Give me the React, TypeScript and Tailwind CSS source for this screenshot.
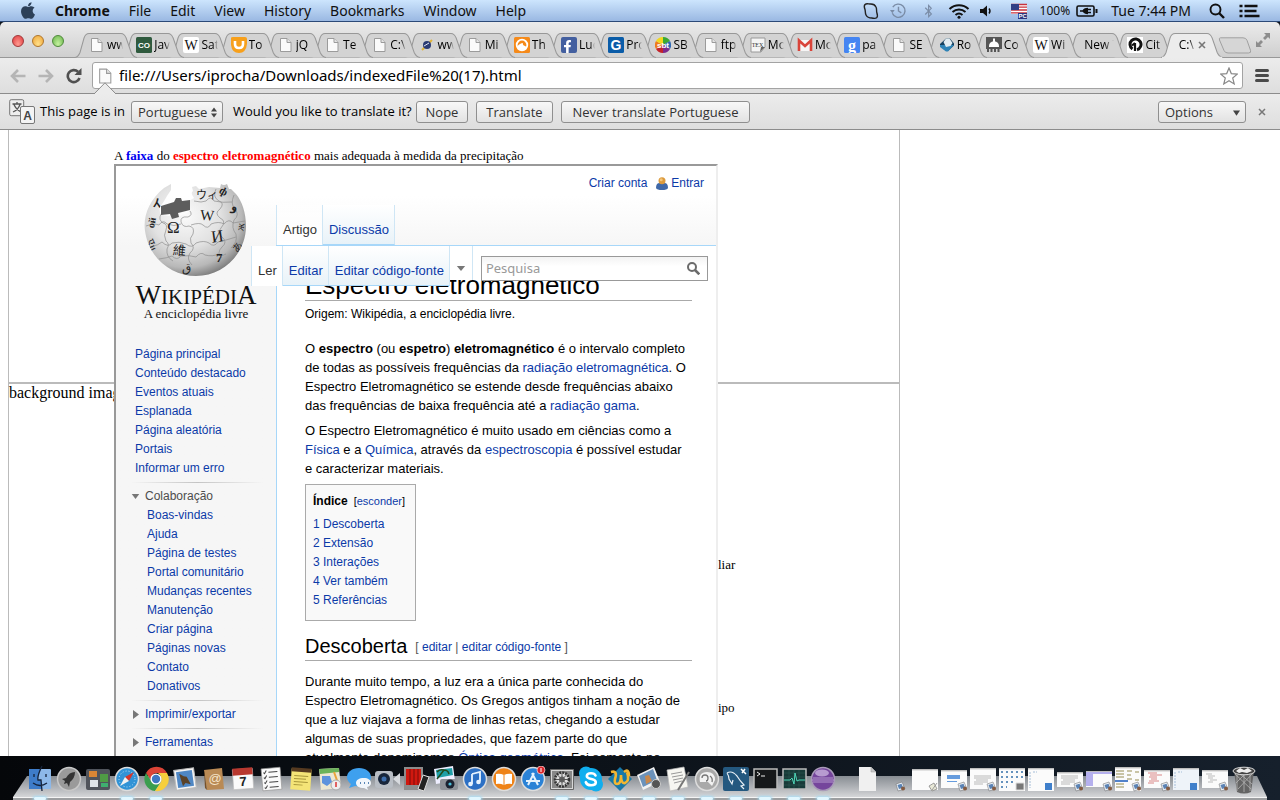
import React from "react";
import { FaApple, FaBluetoothB, FaFacebookF, FaSkype } from "react-icons/fa";

type IconProps = { className?: string };

/* ---------- Menu bar ---------- */

const menus = ["File", "Edit", "View", "History", "Bookmarks", "Window", "Help"];

function MenuBar() {
  return (
    <header className="flex h-[22px] shrink-0 items-center justify-between border-b border-[#2c4a78] bg-linear-to-b from-[#cde5fd] to-[#9ab8e2] pr-5 pl-5 font-['Noto_Sans',sans-serif] text-[14px] leading-[20px] text-[#111]">
      <nav className="flex items-center gap-[19px]">
        <FaApple className="h-[19px] w-[16px] text-[#2d4058]" />
        <button className="font-bold">Chrome</button>
        {menus.map((m) => (
          <button key={m}>{m}</button>
        ))}
      </nav>
      <div className="flex items-center">
        <svg viewBox="0 0 18 18" className="mr-[9px] h-[18px] w-[18px]" fill="none" stroke="#222" strokeWidth="1.4">
          <path d="M3 2.500C4.500 1 6.500 2 8 2c3-.3 5 .8 6 3 1 2 .3 4 .8 5.500.7 2 1.200 4-.2 5.300-1.500 1.200-3.300.3-4.800.2C7 16 5 15 4 13c-1-2-.5-4-1-5.500C2.300 5.800 1.600 4 3 2.500Z" />
        </svg>
        <svg viewBox="0 0 18 18" className="mr-[16px] h-[17px] w-[18px]" fill="none" stroke="#7a8ca6" strokeWidth="1.500">
          <path d="M3.500 5.500A7 7 0 1 1 3 12M9.500 5v4.500l3 2" />
          <path d="M.5 8.500h5L3 12Z" fill="#7a8ca6" stroke="none" />
        </svg>
        <FaBluetoothB className="mr-[14px] h-[14px] w-[11px] text-[#7a8ca6]" />
        <svg viewBox="0 0 22 16" className="mr-[10px] h-[16px] w-[22px]" fill="none" stroke="#111" strokeWidth="2">
          <path d="M1.500 6a14 14 0 0 1 19 0M4.500 9a10 10 0 0 1 13 0M7.500 12a5.500 5.500 0 0 1 7 0" />
          <circle cx="11" cy="14.300" r="1.500" fill="#111" stroke="none" />
        </svg>
        <svg viewBox="0 0 12 12" className="mr-[19px] h-[12px] w-[12px]">
          <path d="M0 4h3l4-3.500v11L3 8H0Z" fill="#111" />
          <path d="M9 3.500q2 2.500 0 5" fill="none" stroke="#111" strokeWidth="1.400" />
        </svg>
        <svg viewBox="0 0 16 16" className="mr-[13px] h-[16px] w-[16px]">
          <path fill="#fff" d="M0 1h16v10H0z" />
          <path stroke="#c8323c" strokeWidth="1.300" d="M0 1.500h16M0 4.200h16M0 7h16M0 9.800h16" />
          <path fill="#313d85" d="M0 1h8v6H0z" />
          <path fill="#2d357d" d="M7 10h9v6H7z" />
          <text x="7.500" y="15.300" fontSize="6" fontWeight="bold" fill="#fff" fontFamily="Liberation Sans">PC</text>
        </svg>
        <span className="mr-[6px] text-[12px]">100%</span>
        <svg viewBox="0 0 22 12" className="mr-[13px] h-[12px] w-[22px]" fill="none" stroke="#111">
          <rect x="1" y="1" width="17" height="10" rx="1.500" strokeWidth="1.600" />
          <path d="M20.500 4v4" strokeWidth="2" />
          <path d="M4 6h3M12 4.500h3M12 7.500h3" strokeWidth="1.300" />
          <path d="M12 2.800v6.400C9 9.200 7 8 6.500 6 7 4 9 2.800 12 2.800Z" fill="#111" stroke="none" />
        </svg>
        <time className="mr-[18px]">Tue 7:44 PM</time>
        <svg viewBox="0 0 16 16" className="mr-[14px] h-[16px] w-[16px]" fill="none" stroke="#111" strokeWidth="1.900">
          <circle cx="6.500" cy="6.500" r="5" />
          <path d="m10 10 5 5" strokeWidth="2.400" />
        </svg>
        <svg viewBox="0 0 20 14" className="h-[14px] w-[21px]" stroke="#111" strokeWidth="2.600">
          <path d="M0 2h3M5 2h13M0 7h3M5 7h12M0 12h3M5 12h15" />
        </svg>
      </div>
    </header>
  );
}

/* ---------- Favicons ---------- */

const PageIcon = ({ className = "h-4 w-4" }: IconProps) => (
  <svg viewBox="0 0 16 16" className={className}>
    <path d="M2.500 1.500h6.500l4 4v9H2.500Z" fill="#fafafa" stroke="#9b9b9b" />
    <path d="M9 1.500v4h4" fill="#e4e4e4" stroke="#9b9b9b" />
  </svg>
);

const Letter = ({ t, bg, fg, size = 12, serif = false }: { t: string; bg: string; fg: string; size?: number; serif?: boolean }) => (
  <svg viewBox="0 0 16 16" className="h-4 w-4">
    <rect width="16" height="16" rx="1.500" fill={bg} />
    <text x="8" y={8 + size * 0.36} textAnchor="middle" fontSize={size} fontWeight="bold" fill={fg} fontFamily={serif ? "Liberation Serif" : "Liberation Sans"}>
      {t}
    </text>
  </svg>
);

const WikiW = () => (
  <svg viewBox="0 0 16 16" className="h-4 w-4">
    <rect width="16" height="16" rx="2" fill="#fff" />
    <text x="8" y="12.500" textAnchor="middle" fontSize="14" fill="#111" fontFamily="Liberation Serif">W</text>
  </svg>
);

const Udemy = () => (
  <svg viewBox="0 0 16 16" className="h-4 w-4">
    <path d="M0 1q0-1 2-1h12q2 0 2 2v5q-1 9-8 9T0 8Z" fill="#f7a01c" />
    <path d="M4 4v3q0 4 4 4t4-4V4" fill="none" stroke="#fff" strokeWidth="2.600" />
  </svg>
);

const Bug = () => (
  <svg viewBox="0 0 16 16" className="h-4 w-4">
    <path d="m3 13 10-10" stroke="#e0b43a" strokeWidth="2" />
    <circle cx="8" cy="8" r="4" fill="#2b3c73" />
    <path d="m5 9 5-3" stroke="#dfe4f2" />
  </svg>
);

const Grooveshark = () => (
  <svg viewBox="0 0 16 16" className="h-4 w-4">
    <rect width="16" height="16" rx="1.500" fill="#f58a1a" />
    <circle cx="8" cy="8" r="5.300" fill="none" stroke="#fff" strokeWidth="1.800" />
    <path d="M3 10c2-3 4-4 6-4-1 2 2 3 4 4-2 4-8 4-10 0Z" fill="#fff" />
  </svg>
);

const Facebook = () => (
  <span className="flex h-4 w-4 items-end justify-end rounded-[2px] bg-[#435f9f] pr-[3px]">
    <FaFacebookF size={13} color="#fff" />
  </span>
);

const Sbt = () => (
  <svg viewBox="0 0 16 16" className="h-4 w-4">
    <path d="M8 8V0a8 8 0 0 1 7 4Z" fill="#3aa935" />
    <path d="m8 8 7-4a8 8 0 0 1 0 8Z" fill="#2f6ab5" />
    <path d="m8 8 7 4a8 8 0 0 1-7 4Z" fill="#7b2b8d" />
    <path d="M8 8v8a8 8 0 0 1-7-4Z" fill="#c4232b" />
    <path d="m8 8-7 4a8 8 0 0 1 0-8Z" fill="#ee7d1c" />
    <path d="M8 8 1 4a8 8 0 0 1 7-4Z" fill="#f3d81f" />
    <text x="8" y="11" textAnchor="middle" fontSize="8" fontWeight="bold" fill="#fff" fontFamily="Liberation Sans">sbt</text>
  </svg>
);

const Tex = () => (
  <svg viewBox="0 0 16 16" className="h-4 w-4">
    <path d="M1 1h14v9l-4 5H1Z" fill="#f5f5f5" stroke="#999" />
    <text x="7.500" y="9.500" textAnchor="middle" fontSize="6" fill="#333" fontFamily="Liberation Serif">TEX</text>
    <path d="m10 15 1-5h4Z" fill="#666" />
  </svg>
);

const Gmail = () => (
  <svg viewBox="0 0 16 16" className="h-4 w-4">
    <path d="M1 3h14v11H1Z" fill="#f6f6f6" />
    <path d="M2 14V3.500l6 5.500 6-5.500V14" fill="none" stroke="#d9443a" strokeWidth="2.600" />
  </svg>
);

const Cube = () => (
  <svg viewBox="0 0 16 16" className="h-4 w-4">
    <path d="M1 7 7 1.500h4l4 5v2L9 14H7L1 9Z" fill="#15405f" />
    <path d="M1 8v2l6 4.500h2L15 8Z" fill="#2f84b7" />
    <path d="M4.500 5 7 1.500h3.500l3 4.500-2 3-4.500 1Z" fill="#e3edf2" />
  </svg>
);

const Capitol = () => (
  <svg viewBox="0 0 16 16" className="h-4 w-4">
    <path d="M0 0h16v10H0Z" fill="#555" />
    <path d="M3 9q0-4 5-5 5 1 5 5v2H3ZM7 1.500h2V5H7Z" fill="#fff" />
    <path d="M0 10h16v2H0ZM1 12h2v3H1ZM4.500 12h2v3h-2ZM8 12h2v3H8ZM11.500 12h2v3h-2Z" fill="#555" />
  </svg>
);

const CiteIcon = () => (
  <svg viewBox="0 0 16 16" className="h-4 w-4">
    <path fill="#fff" d="M0 0h16v16H0z" />
    <path d="M5.500 12A5.500 5.500 0 1 1 10 12.700" fill="none" stroke="#111" strokeWidth="3" />
    <path d="M8 6v8M5 8.500 8 6" stroke="#111" strokeWidth="2.200" />
  </svg>
);

const tabs: { icon: React.ReactNode; title: string }[] = [
  { icon: <PageIcon />, title: "ww" },
  { icon: <Letter t="CO" bg="#2f5a3e" fg="#fff" size={8} />, title: "Jav" },
  { icon: <WikiW />, title: "Sat" },
  { icon: <Udemy />, title: "To" },
  { icon: <PageIcon />, title: "jQ" },
  { icon: <PageIcon />, title: "Te" },
  { icon: <PageIcon />, title: "C:\\" },
  { icon: <Bug />, title: "ww" },
  { icon: <PageIcon />, title: "Mi" },
  { icon: <Grooveshark />, title: "Th" },
  { icon: <Facebook />, title: "Luc" },
  { icon: <Letter t="G" bg="#0a5ca8" fg="#fff" size={14} />, title: "Pro" },
  { icon: <Sbt />, title: "SB" },
  { icon: <PageIcon />, title: "ftp" },
  { icon: <Tex />, title: "Mo" },
  { icon: <Gmail />, title: "Mo" },
  { icon: <Letter t="g" bg="#4585f2" fg="#fff" size={16} serif />, title: "pa" },
  { icon: <PageIcon />, title: "SE" },
  { icon: <Cube />, title: "Ro" },
  { icon: <Capitol />, title: "Co" },
  { icon: <WikiW />, title: "Wi" },
  { icon: null, title: "New T" },
  { icon: <CiteIcon />, title: "Cit" },
  { icon: null, title: "C:\\" },
];

/* ---------- Browser chrome ---------- */

function Tab({ icon, title, index }: { icon: React.ReactNode; title: string; index: number }) {
  const active = index === tabs.length - 1;
  return (
    <div className="relative h-[25px] min-w-0 flex-1" style={{ zIndex: active ? 40 : 30 - index }}>
      <svg viewBox="0 0 62 25" preserveAspectRatio="none" className="absolute top-0 -left-[7px] h-[25px] w-[calc(100%+15px)]">
        <path d="M0 24.500C3 24 4 22 5 19.500L9 5Q10.500.5 14 .5H46Q49 .5 51 5l5 14.500Q58 24 62 24.500" fill={active ? "#ececec" : "#d3d3d3"} stroke="#989898" />
        {active && <path d="M1 24.500h60" stroke="#ececec" strokeWidth="1.500" />}
      </svg>
      <button className={`relative flex h-[24px] w-full items-center gap-[2px] overflow-hidden pl-[7px] text-[12px] text-black ${active ? "pr-[5px]" : "pr-[6px]"}`}>
        {icon && <span className="shrink-0">{icon}</span>}
        <span className={`min-w-0 flex-1 overflow-hidden mask-r-from-70% text-left whitespace-nowrap ${icon ? "" : "pl-[4px]"}`}>{title}</span>
        {active && (
          <svg viewBox="0 0 8 8" className="mr-[4px] h-[8px] w-[8px] shrink-0" stroke="#777" strokeWidth="1.600">
            <path d="m1 1 6 6M7 1 1 7" />
          </svg>
        )}
      </button>
    </div>
  );
}

function TabStrip() {
  return (
    <div className="relative flex h-[36px] shrink-0 items-end rounded-t-[5px] border-b border-[#989898] bg-linear-to-b from-[#ebebeb] to-[#cfcfcf] pl-[12px]">
      <div className="flex w-[70px] items-center gap-[8px] self-center pt-[2px]">
        <button aria-label="Close" className="h-[12px] w-[12px] rounded-full border border-[#a1383a] bg-radial-[at_50%_80%] from-[#ff9a90] to-[#df3a3e]" />
        <button aria-label="Minimise" className="h-[12px] w-[12px] rounded-full border border-[#b0762b] bg-radial-[at_50%_80%] from-[#ffe08a] to-[#eea436]" />
        <button aria-label="Zoom" className="h-[12px] w-[12px] rounded-full border border-[#4f8a3b] bg-radial-[at_50%_80%] from-[#c6f2a0] to-[#68b44a]" />
      </div>
      <div className="isolate -mb-px flex min-w-0 flex-1 font-['Open_Sans',sans-serif]">
        {tabs.map((t, i) => (
          <Tab key={i} index={i} icon={t.icon} title={t.title} />
        ))}
      </div>
      <button aria-label="New tab" className="mb-[3px] ml-[3px]">
        <svg viewBox="0 0 34 17" className="h-[17px] w-[34px]">
          <path d="M2.500.8H25q3 0 4 2.500l3.500 10q1 2.700-2 2.700H10q-3 0-4-2.500L1.500 3Q.8.8 2.500.8Z" fill="#d6d6d6" stroke="#a0a0a0" />
        </svg>
      </button>
      <svg viewBox="0 0 16 16" className="mr-[9px] mb-[9px] ml-[3px] h-[16px] w-[16px]" fill="#8d8d8d">
        <path d="M9 1h6v6l-2-2-3 3-2-2 3-3ZM7 15H1V9l2 2 3-3 2 2-3 3Z" />
      </svg>
    </div>
  );
}

function Arrow({ flip = false }: { flip?: boolean }) {
  return (
    <button aria-label={flip ? "Forward" : "Back"}>
      <svg viewBox="0 0 16 14" className={`h-[14px] w-[16px] ${flip ? "-scale-x-100" : ""}`} fill="none" stroke="#b5b5b5" strokeWidth="2.600">
        <path d="M15.500 7H2.500M8 1 2 7l6 6" />
      </svg>
    </button>
  );
}

function Toolbar() {
  return (
    <div className="flex h-[36px] shrink-0 items-center border-b border-[#8c8c8c] bg-linear-to-b from-[#ececec] to-[#dedede] pr-[11px] pl-[10px]">
      <div className="flex w-[82px] items-center gap-[12px]">
        <Arrow />
        <Arrow flip />
        <button aria-label="Reload">
          <svg viewBox="0 0 16 16" className="h-[16px] w-[16px]">
            <path d="M13.500 10A6 6 0 1 1 12 3.800" fill="none" stroke="#505050" strokeWidth="2.600" />
            <path d="M15.500 0v7H8.500Z" fill="#505050" />
          </svg>
        </button>
      </div>
      <div className="relative flex h-[27px] min-w-0 flex-1 items-center rounded-[3px] border border-[#a3a3a3] bg-white pr-[4px] pl-[4px]">
        <PageIcon className="h-[18px] w-[17px]" />
        <input
          aria-label="Address"
          className="min-w-0 flex-1 bg-transparent pl-[5px] font-['Noto_Sans',sans-serif] text-[15px] text-black outline-none"
          defaultValue="file:///Users/iprocha/Downloads/indexedFile%20(17).html"
        />
        <button aria-label="Bookmark">
          <svg viewBox="0 0 18 18" className="h-[18px] w-[18px]" fill="#fff" stroke="#888" strokeWidth="1.200">
            <path d="m9 1 2.300 5.600 6 .5-4.600 3.900 1.500 5.900L9 13.700l-5.200 3.200L5.300 11 .7 7.100l6-.5Z" />
          </svg>
        </button>
        <svg viewBox="0 0 22 12" className="absolute -bottom-[6px] left-[1px] h-[12px] w-[22px]">
          <path d="M0 12 11 .8 22 12" fill="#ececec" stroke="#8c8c8c" />
        </svg>
      </div>
      <button aria-label="Menu" className="ml-[12px] flex w-[14px] flex-col gap-[2px]">
        <span className="h-[3px] rounded-sm bg-[#4a4a4a]" />
        <span className="h-[3px] rounded-sm bg-[#4a4a4a]" />
        <span className="h-[3px] rounded-sm bg-[#4a4a4a]" />
      </button>
    </div>
  );
}

const pushButton =
  "h-[22px] rounded-[3px] border border-[#8f8f8f] bg-linear-to-b from-[#f8f8f8] to-[#e2e2e2] leading-[20px] text-[#333]";

function TranslateBar() {
  return (
    <div className="flex h-[36px] shrink-0 items-center border-b border-[#8c8c8c] bg-linear-to-b from-[#ececec] to-[#dedede] pr-[14px] pl-[9px] font-['Open_Sans',sans-serif] text-[13px] whitespace-nowrap text-black">
      <svg viewBox="0 0 26 26" className="h-[26px] w-[26px]">
        <rect x=".7" y=".7" width="14" height="16" rx="1.500" fill="#eee" stroke="#777" />
        <path d="M3.500 5h9M8 3v2M5 5.500q2 5 7 7.500M11 5.500Q9 11 4 13" fill="none" stroke="#555" strokeWidth="1.300" />
        <rect x="11.500" y="7.500" width="14" height="17" rx="1.500" fill="#f4f4f4" stroke="#777" />
        <text x="18.500" y="20.500" textAnchor="middle" fontSize="12" fontWeight="bold" fill="#444" fontFamily="Liberation Sans">A</text>
      </svg>
      <label htmlFor="language" className="ml-[5px] w-[91px]">This page is in</label>
      <span className="relative">
        <select id="language" className={`${pushButton} w-[92px] appearance-none pl-[6px]`}>
          <option>Portuguese</option>
        </select>
        <svg viewBox="0 0 6 10" className="pointer-events-none absolute top-[6px] right-[6px] h-[11px] w-[6px]" fill="#444">
          <path d="m0 4 3-4 3 4ZM0 6l3 4 3-4Z" />
        </svg>
      </span>
      <span className="ml-[10px] w-[183px]">Would you like to translate it?</span>
      <span className="flex gap-[8px]">
        <button className={`${pushButton} w-[52px]`}>Nope</button>
        <button className={`${pushButton} w-[77px]`}>Translate</button>
        <button className={`${pushButton} w-[189px]`}>Never translate Portuguese</button>
      </span>
      <span className="relative ml-auto">
        <select aria-label="Options" className={`${pushButton} w-[88px] appearance-none pl-[6px]`}>
          <option>Options</option>
        </select>
        <svg viewBox="0 0 8 6" className="pointer-events-none absolute top-[9px] right-[6px] h-[6px] w-[7px]" fill="#444">
          <path d="M0 0h8L4 6Z" />
        </svg>
      </span>
      <button aria-label="Dismiss" className="ml-[12px]">
        <svg viewBox="0 0 8 8" className="h-[8px] w-[8px]" stroke="#777" strokeWidth="1.500">
          <path d="m1 1 6 6M7 1 1 7" />
        </svg>
      </button>
    </div>
  );
}

/* ---------- Wiki page ---------- */

const A = ({ children }: { children: React.ReactNode }) => (
  <a href="#" className="text-[#0b3aa8]">{children}</a>
);

function Globe() {
  return (
    <svg viewBox="0 0 104 96" className="h-[96px] w-[104px]">
      <defs>
        <radialGradient id="globe" cx=".4" cy=".36" r=".66">
          <stop offset="0" stopColor="#fafafa" />
          <stop offset=".5" stopColor="#e2e2e2" />
          <stop offset=".82" stopColor="#b8b8b8" />
          <stop offset="1" stopColor="#7a7a7a" />
        </radialGradient>
        <clipPath id="ball">
          <path d="M27 3 20 7C5 19-1 35 1 50 5 78 28 95 52 95c28 0 50-23 50-50 0-13-4-25-10-32l-5-5h-2l-2-5q-3 2-6 0l-1 4-11-1-10 2-3-3-4 1 1 4q-3 2 1 7l-5 3v11l-12 5-16-2q-2-4-1-8 5-7 7-11l4-6Z" />
        </clipPath>
      </defs>
      <g clipPath="url(#ball)">
        <path fill="url(#globe)" d="M0 0h104v96H0z" />
        <g fill="none" stroke="#8e8e8e" strokeWidth=".7">
          <path d="M17 33q-3 6 2 9 5 1 3 7-3 5 0 11 4 3 1 8-1 8 6 12M46 30q3 4-2 6-8-1-7 5 2 6 8 4 6 1 4 8-4 4-2 9 5 5-1 10-4 6 2 12M72 8q-4 8 3 12 6 2 1 8-6 4 0 9 7 3 1 10-4 5 1 9 6 5 0 10-6 6 0 11" />
          <path d="M2 45q8-3 13-1 4-6 8-1 7 3 14 0M47 44q9-3 12 0 5 5 8-1 8-3 13 0 5-6 9-1l12-2M6 66q9-2 12-5 6 6 10 1 7-2 14 1 6 5 10-1 8-3 13 0 5 5 9-1 9-2 18-5M15 78q8-1 13-3 5 5 9 0 9-1 15 1 5-6 9-2 8 2 13-1 5 3 8 0M50 20q8 2 12 0 5-6 8 0 9 2 18 1" />
          <path d="M90 14q-4 9 1 14 5 6-1 11-3 8 2 14 2 8-5 14" />
        </g>
        <g fill="#222" fontFamily="'Liberation Serif','Noto Sans CJK SC',serif">
          <text x="23" y="52" fontSize="17">Ω</text>
          <text x="56" y="39" fontSize="15" transform="rotate(4 60 34)">W</text>
          <text x="67" y="61" fontSize="17" transform="rotate(-8 72 55)">И</text>
          <text x="29" y="74" fontSize="13" transform="rotate(5 35 68)">維</text>
          <text x="72" y="81" fontSize="13" fontWeight="bold">7</text>
          <text x="88" y="29" fontSize="12" transform="rotate(12 90 26)" fontWeight="bold">و</text>
          <text x="2" y="46" fontSize="10" transform="rotate(-80 7 42)" fontWeight="bold">ой</text>
          <text x="4" y="66" fontSize="10" transform="rotate(65 8 62)">एи</text>
          <text x="52" y="18" fontSize="11">ウィ</text>
          <text x="76" y="14" fontSize="11" transform="rotate(30 80 10)" fontWeight="bold">ф</text>
          <text x="8" y="28" fontSize="11" transform="rotate(-35 12 24)" fontWeight="bold">イ</text>
          <text x="94" y="48" fontSize="11" transform="rotate(-80 98 46)">ж</text>
          <text x="38" y="91" fontSize="12">ق</text>
          <text x="90" y="70" fontSize="10" transform="rotate(-50 94 68)">あ</text>
        </g>
      </g>
      <path d="m17 25 13-4 2-4h5l1 3 8-1v10l-12 3 1 4-7 2-2-5-9 1Z" fill="#5d5d5d" />
    </svg>
  );
}

const mainLinks = ["Página principal", "Conteúdo destacado", "Eventos atuais", "Esplanada", "Página aleatória", "Portais", "Informar um erro"];
const collabLinks = ["Boas-vindas", "Ajuda", "Página de testes", "Portal comunitário", "Mudanças recentes", "Manutenção", "Criar página", "Páginas novas", "Contato", "Donativos"];

const Divider = () => <div className="-ml-[4px] h-px bg-linear-to-r from-transparent via-[#c4c4c4] to-transparent" />;

const Closed = ({ children }: { children: React.ReactNode }) => (
  <h3 className="flex h-[27px] items-center">
    <svg viewBox="0 0 6 9" className="-ml-[2px] h-[9px] w-[6px]" fill="#777">
      <path d="m0 0 6 4.500L0 9Z" />
    </svg>
    <span className="ml-[6px]"><A>{children}</A></span>
  </h3>
);

function Sidebar() {
  return (
    <aside className="w-[160px] shrink-0 pl-[19px] text-[12px] leading-[19px]">
      <a href="#" className="flex h-[158px] flex-col items-center pt-[15px] pr-[19px] font-['Liberation_Serif',serif] text-[#111]">
        <Globe />
        <span className="mt-[3px] text-[27px] leading-[30px]">
          W<span className="text-[21px]">IKIPÉDI</span>A
        </span>
        <span className="-mt-[6px] text-[13px] leading-[16px]">A enciclopédia livre</span>
      </a>
      <ul className="mt-[21px] mb-[4px]">
        {mainLinks.map((l) => <li key={l}><A>{l}</A></li>)}
      </ul>
      <div className="mr-[12px]">
        <Divider />
        <h3 className="mt-[4px] flex items-center text-[#4d4d4d]">
          <svg viewBox="0 0 9 6" className="-ml-[4px] h-[5px] w-[9px]" fill="#777">
            <path d="M0 0h9L4.500 6Z" />
          </svg>
          <span className="ml-[5px]">Colaboração</span>
        </h3>
        <ul className="mb-[4px] pl-[12px]">
          {collabLinks.map((l) => <li key={l}><A>{l}</A></li>)}
        </ul>
        <Divider />
        <Closed>Imprimir/exportar</Closed>
        <Divider />
        <Closed>Ferramentas</Closed>
      </div>
    </aside>
  );
}

const wikiTab = "flex h-[40px] items-center border-r border-r-[#cfe6f5] pt-[10px] pr-[5px] pl-[6px] text-[13px]";
const wikiTabOff = `${wikiTab} border-b border-b-[#a7d7f9] bg-linear-to-b from-white to-[#e8f2f8] text-[#0b3aa8]`;

function WikiHeader() {
  return (
    <div className="flex h-[79px] flex-col justify-between">
      <div className="flex items-center justify-end pt-[8px] pr-[12px] leading-[19px]">
        <A>Criar conta</A>
        <svg viewBox="0 0 12 13" className="mr-[3px] ml-[9px] h-[13px] w-[12px]">
          <path d="M0 11q0-5 3.500-5h5Q12 6 12 11q-1 2-6 2t-6-2Z" fill="#3f68a8" />
          <circle cx="6" cy="3.800" r="3.500" fill="#dc9a3c" />
          <circle cx="5.200" cy="2.800" r="1.500" fill="#f3c57b" />
        </svg>
        <A>Entrar</A>
      </div>
      <nav className="flex">
        <a href="#" className={`${wikiTab} border-l border-l-[#cfe6f5] bg-linear-to-b from-white/40 to-white text-[#333]`}>Artigo</a>
        <a href="#" className={wikiTabOff}>Discussão</a>
      </nav>
    </div>
  );
}

function ActionRow() {
  return (
    <div className="absolute top-0 -left-[26px] right-[8px] flex items-start">
      <nav className="flex">
        <a href="#" className={`${wikiTab} border-l border-l-[#cfe6f5] bg-white text-[#333]`}>Ler</a>
        <a href="#" className={wikiTabOff}>Editar</a>
        <a href="#" className={wikiTabOff}>Editar código-fonte</a>
      </nav>
      <div className="flex h-[34px] min-w-0 flex-1 bg-white">
        <button aria-label="Mais" className="flex w-[23px] items-center justify-center border-r border-[#cfe6f5] pt-[10px]">
          <svg viewBox="0 0 10 6" className="h-[5px] w-[10px]" fill="#777"><path d="M0 0h10L5 6Z" /></svg>
        </button>
        <div className="mt-[10px] ml-[8px] flex h-[25px] min-w-0 flex-1 items-center border border-[#999] bg-linear-to-b from-[#f3f3f3] to-white to-40% px-[4px]">
          <input aria-label="Pesquisa" placeholder="Pesquisa" className="min-w-0 flex-1 bg-transparent font-['Noto_Sans',sans-serif] text-[13px] outline-none placeholder:text-[#999]" />
          <svg viewBox="0 0 13 13" className="mr-[3px] h-[13px] w-[13px]" fill="none" stroke="#6b6b6b" strokeWidth="2">
            <circle cx="5" cy="5" r="4" />
            <path d="m8 8 4.300 4.300" strokeWidth="2.600" />
          </svg>
        </div>
      </div>
    </div>
  );
}

const toc = ["Descoberta", "Extensão", "Interações", "Ver também", "Referências"];

function Article() {
  return (
    <article className="pr-[24px] pl-[28px] text-[13px] leading-[19px] text-black">
      <h1 className="mt-[22px] h-[33px] border-b border-[#aaa] text-[26px] leading-[34px] whitespace-nowrap">Espectro eletromagnético</h1>
      <p className="mt-[4px] text-[12px]">Origem: Wikipédia, a enciclopédia livre.</p>
      <p className="mt-[15px] whitespace-nowrap">
        O <b>espectro</b> (ou <b>espetro</b>) <b>eletromagnético</b> é o intervalo completo<br />
        de todas as possíveis frequências da <A>radiação eletromagnética</A>. O<br />
        Espectro Eletromagnético se estende desde frequências abaixo<br />
        das frequências de baixa frequência até a <A>radiação gama</A>.
      </p>
      <p className="mt-[6px] whitespace-nowrap">
        O Espectro Eletromagnético é muito usado em ciências como a<br />
        <A>Física</A> e a <A>Química</A>, através da <A>espectroscopia</A> é possível estudar<br />
        e caracterizar materiais.
      </p>
      <section className="mt-[6px] h-[137px] w-[111px] border border-[#aaa] bg-[#f9f9f9] pt-[7px] pl-[7px] text-[12px] whitespace-nowrap">
        <h2 className="flex items-baseline gap-[6px] font-bold">
          Índice <span className="text-[11px] font-normal">[<A>esconder</A>]</span>
        </h2>
        <ol className="mt-[4px]">
          {toc.map((t, i) => <li key={t}><A>{i + 1} {t}</A></li>)}
        </ol>
      </section>
      <h2 className="mt-[12px] flex h-[28px] items-center gap-[8px] border-b border-[#aaa] text-[20px] whitespace-nowrap">
        Descoberta
        <span className="pt-[2px] text-[12px] text-[#555]">[ <A>editar</A> | <A>editar código-fonte</A> ]</span>
      </h2>
      <p className="mt-[11px] whitespace-nowrap">
        Durante muito tempo, a luz era a única parte conhecida do<br />
        Espectro Eletromagnético. Os Gregos antigos tinham a noção de<br />
        que a luz viajava a forma de linhas retas, chegando a estudar<br />
        algumas de suas propriedades, que fazem parte do que<br />
        atualmente denominamos <A>Óptica geométrica</A>. Foi somente no
      </p>
    </article>
  );
}

function Page() {
  return (
    <main className="relative min-h-0 flex-1 overflow-hidden bg-white font-['Liberation_Serif',serif] text-black">
      <div className="ml-[8px] flex h-full w-[892px] flex-col border-x border-[#bbb]">
        <div className="h-[254px] shrink-0 border-b-2 border-[#bbb]" />
        <p className="text-[16px] leading-[18px]">background image</p>
        <div className="pl-[709px] text-[13px] leading-[18px]">
          <p className="mt-[154px]">liar</p>
          <p className="mt-[125px]">ipo</p>
        </div>
      </div>
      <div className="absolute top-[18px] left-[114px] w-[604px]">
        <p className="text-[13px] leading-[16px]">
          A <b className="text-[#0000f0]">faixa</b> do <b className="text-[#f00]">espectro eletromagnético</b> mais adequada à medida da precipitação
        </p>
        <div className="flex border-2 border-t-[#999] border-r-[#eee] border-b-[#eee] border-l-[#999] bg-[#f6f6f6] bg-linear-to-b from-white from-[30px] to-[#f6f6f6] to-[80px] font-['Liberation_Sans',sans-serif] text-[12px]">
          <Sidebar />
          <div className="min-w-0 flex-1">
            <WikiHeader />
            <div className="relative min-h-[520px] border-t border-l border-[#a7d7f9] bg-white">
              <Article />
              <ActionRow />
            </div>
          </div>
        </div>
      </div>
    </main>
  );
}

/* ---------- Dock ---------- */

const Disc = ({ fill, ring = "#ddd", children }: { fill: string; ring?: string; children?: React.ReactNode }) => (
  <g>
    <circle cx="13" cy="13" r="11.500" fill={fill} stroke={ring} strokeWidth="1.500" />
    {children}
  </g>
);

const apps: { name: string; on?: boolean; art: React.ReactNode }[] = [
  { name: "Finder", on: true, art: <g><rect x="2" y="3" width="22" height="20" rx="1" fill="#8db8e8" /><path d="M2 3h12q-4 9-3 11h3l1 9H2Z" fill="#3e7cc9" /><path d="M15 0q-5 10-4 14h3l1 11M7 8v3M19 8v3M6 17q7 5 14 0" fill="none" stroke="#15233b" strokeWidth="1.300" /></g> },
  { name: "Launchpad", art: <Disc fill="#9a9a9a" ring="#c8c8c8"><path d="M19 6q-6 0-9 6l-4 1 3 2-1 3 3-1 2 4 1-5q5-4 5-10Z" fill="#333" /></Disc> },
  { name: "Mission Control", art: <g><rect x="1" y="3" width="24" height="21" rx="2" fill="#50545c" /><path fill="#d98636" d="M4 5h8v6H4z" /><path fill="#4f9b45" d="M15 8h8v8h-8z" /><path fill="#dfe3e8" d="M5 14h8v7H5z" /><path fill="#3fae6f" d="M16 17h7v4h-7z" /></g> },
  { name: "Safari", on: true, art: <Disc fill="#3193d6"><circle cx="13" cy="13" r="8" fill="none" stroke="#bfe3fa" strokeDasharray="1 2" /><path d="m20 6-5 9-4-4Z" fill="#d6362b" /><path d="m6 20 9-5-4-4Z" fill="#f2f2f2" /></Disc> },
  { name: "Chrome", on: true, art: <g><path d="M3 7a12 12 0 0 1 21 0H13a6 6 0 0 0-5 7Z" fill="#db4437" /><path d="M3 7a12 12 0 0 0 9 18l6-9a6 6 0 0 1-10-1Z" fill="#3a9e4f" /><path d="M24 7a12 12 0 0 1-12 18l6-9q2-5-3-9Z" fill="#f7cf3c" /><circle cx="13" cy="13" r="5.500" fill="#fff" /><circle cx="13" cy="13" r="4.200" fill="#3f78c3" /></g> },
  { name: "Mail", art: <g transform="rotate(-8 13 13)"><path fill="#f4f4f4" stroke="#bbb" d="M3 3h20v20H3z" /><path fill="#4f87c4" d="M5 5h16v16H5z" /><path d="m8 7 4 3 3 1 3 8-5-2-3 3-1-6Z" fill="#5a4228" /></g> },
  { name: "Contacts", art: <g><path d="m3 4 18-2 2 21-17 1Z" fill="#b98a55" /><path d="m3 4 3 20-2-2Z" fill="#775028" /><text x="14" y="17" textAnchor="middle" fontSize="13" fill="#f4e3c8" fontFamily="Liberation Sans">@</text></g> },
  { name: "Calendar", art: <g transform="rotate(-4 13 13)"><path fill="#fafafa" stroke="#bbb" strokeWidth=".6" d="M3 3h20v20H3z" /><path fill="#b8382f" d="M3 2h20v7H3z" /><text x="13" y="20" textAnchor="middle" fontSize="13" fontWeight="bold" fill="#222" fontFamily="Liberation Sans">7</text></g> },
  { name: "Reminders", art: <g transform="rotate(-5 13 13)"><path fill="#fafafa" stroke="#999" strokeWidth=".7" d="M3 2h19v22H3z" /><path d="m5 6 1 1 2-3M5 11l1 1 2-3M5 16l1 1 2-3M5 21l1 1 2-3M10 6h9M10 11h9M10 16h9M10 21h9" fill="none" stroke="#444" /></g> },
  { name: "Notes", art: <g transform="rotate(4 13 13)"><path fill="#f4e477" d="M3 3h20v21H3z" /><path fill="#563a20" d="M3 2h20v4H3z" /><path d="M6 10h14M6 13h12M6 16h14M6 19h9" stroke="#a7963a" /></g> },
  { name: "Maps", art: <g><path d="m2 3 20-1 2 20-20 2Z" fill="#ece7d2" /><path d="m2 3 20-1v4L3 8Z" fill="#6bb35a" /><path d="M5 10h8l2 6-5 4-5-3Z" fill="#5d93dd" /><path d="m17 6 5 14" stroke="#e9a33b" strokeWidth="2" /><circle cx="19" cy="19" r="5" fill="#eee" stroke="#aaa" /><path d="M19 16v5" stroke="#d33" strokeWidth="1.500" /></g> },
  { name: "Messages", art: <g><path d="M13 2C6 2 1 6 1 11q0 4 4 7l-2 4 6-2c10 2 16-3 16-9 0-5-5-9-12-9Z" fill="#3ea0ee" /><path d="M18 12c-5 0-8 2-8 5s3 5 8 5l4 2-1-3q4-1 4-4c0-3-3-5-7-5Z" fill="#f1f6fb" /><path d="M14 17h1M18 17h1M22 17h1" stroke="#5a86b5" strokeWidth="2" /></g> },
  { name: "FaceTime", art: <g><rect x="0" y="5" width="18" height="17" rx="3" fill="#b8bdc4" /><circle cx="9" cy="13" r="6" fill="#18263b" /><circle cx="9" cy="13" r="2.500" fill="#3e6fae" /><path d="m18 13 7-6v12Z" fill="#d7dade" /></g> },
  { name: "Photo Booth", art: <g><path fill="#8c8c8c" d="M0 1h19v23H0z" /><path fill="#d0180f" d="M2 3h15v16H2z" /><path stroke="#7a0d0a" d="M6 3v16M10 3v16M14 3v16" /><path fill="#222" stroke="#ddd" d="m19 9 6 2-5 14-6-2Z" /></g> },
  { name: "Image Capture", art: <g><path fill="#eef" d="m1 3 19-3 2 15-19 3Z" /><path fill="#1f9fa8" d="m3 4 16-2 1 7-16 3Z" /><path d="m4 13 7-9M11 4q-5-1-7 2M11 4q4 0 5 4" stroke="#234b1f" fill="none" strokeWidth="1.500" /><rect x="7" y="13" width="18" height="11" rx="2" fill="#8e9298" /><circle cx="17" cy="18" r="4.500" fill="#1a2230" /><circle cx="17" cy="18" r="1.600" fill="#4bc0dc" /></g> },
  { name: "iTunes", on: true, art: <Disc fill="#2c70c5"><path d="M10 8 18 6v9.500M10 8v10" fill="none" stroke="#e8f4ff" strokeWidth="1.800" /><circle cx="8.500" cy="18" r="2.300" fill="#e8f4ff" /><circle cx="16.500" cy="16" r="2.300" fill="#e8f4ff" /></Disc> },
  { name: "iBooks", art: <Disc fill="#ef8317"><path d="M5 8q4-1 8 1 4-2 8-1v10q-4-1-8 1-4-2-8-1Z" fill="#fff" /><path d="M13 9v10" stroke="#ef8317" /></Disc> },
  { name: "App Store", art: <g><Disc fill="#2a82d6"><path d="m8 19 6-12M18 19 12 7M6 15h14" stroke="#e6f2fc" strokeWidth="2" /></Disc><circle cx="21" cy="4" r="4" fill="#d9252a" stroke="#fff" strokeWidth=".6" /><path d="M21 2v4" stroke="#fff" /></g> },
  { name: "System Preferences", on: true, art: <g><path fill="#d7d7d7" stroke="#666" d="M1.500 3.500h23v20h-23z" /><path fill="#888" d="M3 5h20v17H3z" /><circle cx="13" cy="13.500" r="7" fill="#ddd" stroke="#333" strokeWidth="2.500" strokeDasharray="2 1" /><circle cx="13" cy="13.500" r="3" fill="#666" /><path d="M13 7v13M7 13.500h12M8.500 9l9 9M17.500 9l-9 9" stroke="#555" /></g> },
  { name: "Skype", on: true, art: <g><circle cx="13" cy="13" r="11" fill="#10aeee" /><circle cx="8" cy="7.500" r="7" fill="#10aeee" /><circle cx="18" cy="18.500" r="7" fill="#10aeee" /><path d="M17.500 9.500Q16.500 7.300 13 7.300 9 7.300 8.800 10c0 2 2 2.500 4.300 3 2.600.6 4.700 1 4.700 3.200 0 2-2 3-4.700 3-3.300 0-4.700-1.300-5.300-3" fill="none" stroke="#fff" strokeWidth="2.600" strokeLinecap="round" /></g> },
  { name: "Weka", on: true, art: <g><path d="m13 1 12 12-12 12L1 13Z" fill="#1879a8" /><path d="M4 6q7-2 4 7-1 5 2 5 4 0 4-9 0 9 4 8 5-2 2-11M17 6q5-4 5 4" fill="none" stroke="#f2b632" strokeWidth="2.600" /></g> },
  { name: "Preview", on: true, art: <g><path fill="#f2f2f2" d="m1 9 17-8 6 15-17 8Z" /><path fill="#6b92bb" d="m3 10 14-7 4 11-14 7Z" /><path fill="#c9884c" d="m9 10 4-1 3 6-6 3Z" /><circle cx="20" cy="18" r="4.500" fill="#555" stroke="#ccc" /></g> },
  { name: "TextEdit", on: true, art: <g><path fill="#f6f6f1" stroke="#bbb" strokeWidth=".7" d="m2 4 17-3 4 20-18 4Z" /><path d="m6 8 11-2M7 11l11-2M8 14l10-2M9 17l8-2" stroke="#999" /><path d="M24 6 13 24" stroke="#777" strokeWidth="2" /></g> },
  { name: "Postgres", on: true, art: <Disc fill="#a9a9a9" ring="#ddd"><path d="M6 16q-2-10 7-10 8 0 8 8l-3 6-4-4h-5Z" fill="#f2f2f2" /><path d="M8 12q0-3 3-3t3 3-2 3M16 10q3 2 2 6" fill="none" stroke="#777" strokeWidth="1.300" /></Disc> },
  { name: "MySQL Workbench", on: true, art: <g><rect x="0" y="1" width="26" height="24" rx="2" fill="#24587f" /><path d="M4 7q5-3 10 3 3 5 7 9l-3 1 3 3M4 7q2 3 2 6l3 5 1-4" fill="none" stroke="#e8eff5" strokeWidth="1.200" /><path d="m18 3 5 5M22 3l-3 4" stroke="#fff" strokeWidth="1.500" /></g> },
  { name: "Terminal", on: true, art: <g><path fill="#16181a" stroke="#bbb" strokeWidth="1.500" d="M2 3h23v20H2z" /><path d="m5 6 3 2-3 2M9 10h4" fill="none" stroke="#eee" /></g> },
  { name: "Activity Monitor", on: true, art: <g><path fill="#173a38" stroke="#bbb" strokeWidth="1.500" d="M2 3h23v20H2z" /><path d="M3 7h21M3 11h21M3 15h21M3 19h21M8 4v18M13 4v18M18 4v18" stroke="#28554f" strokeWidth=".7" /><path d="M3 14h6l2-2 2 6 1-11 2 8 2-1h6" fill="none" stroke="#4fd8b8" /></g> },
  { name: "Eclipse", on: true, art: <Disc fill="#75459c" ring="#a99bb9"><path d="M3 12h20M2 14h22M3 16h20" stroke="#c6b0da" strokeWidth=".8" /><ellipse cx="12" cy="7" rx="7" ry="3.500" fill="#b79bd0" /></Disc> },
];

const Doc = () => (
  <svg viewBox="0 0 26 26" className="h-[26px] w-[26px]">
    <path d="M5 1h12l5 5v19H5Z" fill="#f0f0f0" />
    <path d="M17 1v5h5" fill="#c6c6c6" stroke="#999" strokeWidth=".5" />
  </svg>
);

const Badge = () => (
  <g>
    <path d="m17 18 6-2 3 7-7 2Z" fill="#e9eef4" stroke="#666" strokeWidth=".5" />
    <path d="m18.500 19 4-1.300 1.500 4-4 1.300Z" fill="#5b83b4" />
    <circle cx="24" cy="22.500" r="2" fill="#845b42" />
  </g>
);

type Thumb = "badge" | "sheet" | "dialog" | "text" | "icons" | "window" | "wide" | "purple" | "split" | "red" | "pale" | "code";
const thumbs: Thumb[] = ["badge", "sheet", "dialog", "text", "icons", "window", "wide", "purple", "split", "red", "pale", "code"];

const tops: Record<Thumb, number> = {
  badge: 0, sheet: 3, dialog: 4, text: 2, icons: 2, window: 2, wide: 6, purple: 5, split: 1, red: 4, pale: 2, code: 4,
};
const bottoms: Record<Thumb, number> = {
  badge: 0, sheet: 24, dialog: 22, text: 23, icons: 25, window: 25, wide: 21, purple: 21, split: 25, red: 22, pale: 24, code: 22,
};

function Miniature({ kind }: { kind: Thumb }) {
  if (kind === "badge") return <svg viewBox="0 0 26 26" className="h-[26px] w-[26px]"><g transform="translate(-4 0)"><Badge /></g></svg>;
  const top = tops[kind];
  const bottom = bottoms[kind];
  return (
    <svg viewBox="0 0 26 26" className="h-[26px] w-[26px]">
      <path d={`M0 ${top}h26V${bottom}H0Z`} fill={kind === "pale" ? "#eef3f9" : "#fbfbfb"} />
      <path d={`M0 ${top + 0.7}h26`} stroke="#bdbdbd" strokeWidth="1.400" />
      {kind === "dialog" && <path d="M6 9h13v4H6ZM6 15h10v1H6Z" fill="#659bdd" />}
      {(kind === "text" || kind === "wide") && <path d="M4 10h17M4 12h17M6 14h12M4 16h14M4 18h9" stroke="#aaa" strokeWidth=".8" />}
      {kind === "icons" && <path d="M2 6h22M2 11h22M2 16h14M2 21h6" stroke="#6592bd" strokeWidth="2" strokeDasharray="2 3" />}
      {(kind === "window" || kind === "pale") && <path d="M2 6v16M5 6h4" fill="none" stroke="#a5bdd8" strokeDasharray="2 1" />}
      {kind === "purple" && <path d="M0 7h7v13H0ZM0 6h26v2H0Z" fill="#b5b0ee" />}
      {kind === "split" && <path d="M1 5h8M1 8h8M1 11h8M1 18h8M1 21h8M12 5h5M12 9h4M12 13h5M20 6h4M20 14h4" stroke="#b9b38a" strokeWidth="1.500" />}
      {kind === "split" && <path d="M0 15h13" stroke="#5282ca" strokeWidth="2" />}
      {kind === "red" && <path d="M4 7h9M6 9h12M5 11h8M7 13h6M5 15h10M4 17h6" stroke="#d98585" />}
      {kind === "code" && <path d="M4 8h6M6 10h7M6 12h5M8 14h7M6 16h5" stroke="#bbb" />}
      {kind === "window" || kind === "pale" ? <path d="M17 17h7v7h-7Z" fill="#3f7fcb" /> : null}
      {kind === "icons" ? <path d="M17 17h8v7h-8Z" fill="#777" stroke="#ddd" /> : null}
      {kind === "sheet" ? <path d="m17 20 5-3 3 6-5 2ZM25 17l-5 7" fill="#e9e9d8" stroke="#888" strokeWidth=".8" /> : null}
      {["dialog", "text", "wide", "purple", "split", "red", "code"].includes(kind) ? <Badge /> : null}
    </svg>
  );
}

function Trash() {
  return (
    <svg viewBox="0 0 26 28" className="h-[28px] w-[26px]">
      <path d="M3 5h20l-3 21q-7 3-14 0Z" fill="#646464" />
      <path d="m4 8 16 15M8 7l13 11M21 8 7 23M15 7 5 17M6 25V9M13 26V8M19 25V9" stroke="#b4b4b4" strokeWidth=".8" />
      <ellipse cx="13" cy="5" rx="11" ry="3.800" fill="#444" stroke="#ddd" />
      <path d="m5 5 4-3 4 2 4-2 4 3-5 2-5-1-3 1Z" fill="#eee" />
    </svg>
  );
}

function Dock() {
  return (
    <footer className="relative flex h-[44px] shrink-0 justify-center bg-linear-to-r from-[#05070a] to-[#16202c] pl-[4px]">
      <div className="absolute inset-x-[13px] top-[20px] h-[21px] bg-linear-to-b from-[#888d93] to-[#d5d6d8] [clip-path:polygon(14px_0,calc(100%-10px)_0,100%_100%,0_100%)]" />
      <div className="absolute inset-x-[13px] bottom-0 h-[3px] border-t border-[#f4f4f4] bg-[#9c9ea0]" />
      <ul className="relative flex pt-[10px]">
        {apps.map((a) => (
          <li key={a.name} className="flex w-[29px] flex-col items-center justify-between">
            <button aria-label={a.name}>
              <svg viewBox="0 0 26 26" className="h-[26px] w-[26px]">
                {a.art}
              </svg>
            </button>
            {a.on && <span className="h-[3px] w-[12px] rounded-full bg-[#e2f7ff] shadow-[0_0_3px_1px_#a6dcf5]" />}
          </li>
        ))}
      </ul>
      <div className="relative w-[14px]" />
      <ul className="relative flex pt-[10px]">
        <li className="flex w-[30px] justify-center"><Doc /></li>
        {thumbs.map((k) => (
          <li key={k} className="flex w-[29px] justify-center"><Miniature kind={k} /></li>
        ))}
        <li className="flex w-[29px] justify-center"><Trash /></li>
      </ul>
    </footer>
  );
}

export default function App() {
  return (
    <div className="flex h-screen flex-col overflow-hidden bg-[#10151c]">
      <MenuBar />
      <TabStrip />
      <Toolbar />
      <TranslateBar />
      <Page />
      <Dock />
    </div>
  );
}
